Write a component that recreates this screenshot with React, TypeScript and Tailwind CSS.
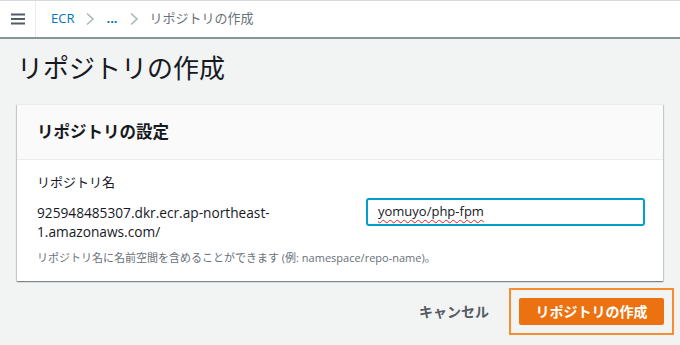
import React from 'react';

const FONT = '"Open Sans", "Noto Sans CJK JP", sans-serif';

function Chevron() {
  return (
    <svg width="10" height="14" viewBox="0 0 10 14" className="mx-[11px]">
      <path d="M2 1.5 L8 7 L2 12.5" fill="none" stroke="#aab7b8" strokeWidth="1.6" />
    </svg>
  );
}

export default function App() {
  return (
    <div className="w-[680px] h-[345px] bg-[#f2f3f3] overflow-hidden text-[#16191f]" style={{ fontFamily: FONT }}>
      {/* top bar */}
      <div className="h-[39px] bg-white border-t border-[#d5dbdb] border-b-2 border-b-[#879596] flex items-stretch">
        <div className="w-[36px] flex items-center justify-center border-r border-[#eaeded]">
          <svg width="14" height="12" viewBox="0 0 14 12">
            <path d="M0 1.5 H14 M0 6 H14 M0 10.5 H14" stroke="#545b64" strokeWidth="1.8" />
          </svg>
        </div>
        <div className="flex items-center pl-[15px] text-[13px]">
          <span className="text-[#0073bb]">ECR</span>
          <Chevron />
          <span className="text-[#0073bb] font-bold">...</span>
          <Chevron />
          <span className="text-[#687078]">リポジトリの作成</span>
        </div>
      </div>

      {/* page */}
      <div className="pl-[17px] pr-[17px]">
        <h1 className="text-[26px] leading-[30px] mt-[14px] mb-[21px] font-normal">リポジトリの作成</h1>

        <div className="w-[646px] bg-white shadow-[0_1px_1px_0_rgba(0,28,36,0.3),1px_1px_1px_0_rgba(0,28,36,0.15),-1px_1px_1px_0_rgba(0,28,36,0.15)] border-t border-[#eaeded]">
          <div className="h-[55px] bg-[#fafafa] border-b border-[#eaeded] flex items-center pl-[20px]">
            <span className="text-[16.5px] font-bold">リポジトリの設定</span>
          </div>
          <div className="pl-[20px] pr-[18px] pt-[12px] pb-[14px]">
            <div className="text-[13px] leading-[20px]">リポジトリ名</div>
            <div className="flex items-start mt-[11px]">
              <div className="w-[329px] text-[13.7px] leading-[19px] text-[#16191f]">
                925948485307.dkr.ecr.ap-northeast-
                <br />
                1.amazonaws.com/
              </div>
              <div className="w-[279px] h-[28px] border-2 border-[#00a1c9] rounded-[3px] flex items-center pl-[10px] -mt-[5px]">
                <span className="text-[13px] underline decoration-wavy decoration-[#e02020] decoration-1 underline-offset-[3px]">yomuyo/php-fpm</span>
              </div>
            </div>
            <div className="text-[11px] leading-[18px] text-[#687078] mt-[8px]">
              リポジトリ名に名前空間を含めることができます (例: namespace/repo-name)。
            </div>
          </div>
        </div>

        {/* actions */}
        <div className="flex items-center justify-end mt-[7px]">
          <span className="text-[14px] font-bold text-[#545b64] mr-[20px]">キャンセル</span>
          <div className="border-2 border-[#f68d2e] p-[8px] -mr-[11px]">
            <div className="w-[145px] h-[27px] bg-[#ec7211] rounded-[2px] flex items-center justify-center text-white text-[14px] font-bold">
              リポジトリの作成
            </div>
          </div>
        </div>
      </div>
    </div>
  );
}
